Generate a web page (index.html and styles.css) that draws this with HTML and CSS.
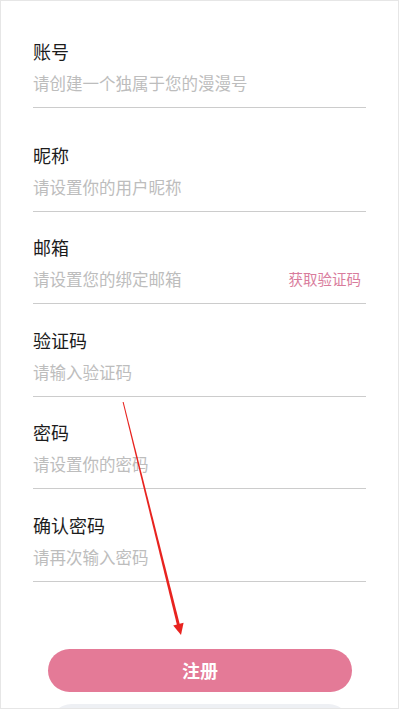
FILE: index.html
```html
<!DOCTYPE html>
<html lang="zh-CN">
<head>
<meta charset="utf-8">
<title>注册</title>
<link rel="stylesheet" href="styles.css">
</head>
<body>
<div class="frame">
  <form class="form">
    <div class="field first">
      <div class="label">账号</div>
      <div class="input-row"><span class="ph">请创建一个独属于您的漫漫号</span></div>
    </div>
    <div class="field">
      <div class="label">昵称</div>
      <div class="input-row"><span class="ph">请设置你的用户昵称</span></div>
    </div>
    <div class="field">
      <div class="label">邮箱</div>
      <div class="input-row"><span class="ph">请设置您的绑定邮箱</span><span class="get-code">获取验证码</span></div>
    </div>
    <div class="field">
      <div class="label">验证码</div>
      <div class="input-row"><span class="ph">请输入验证码</span></div>
    </div>
    <div class="field">
      <div class="label">密码</div>
      <div class="input-row"><span class="ph">请设置你的密码</span></div>
    </div>
    <div class="field">
      <div class="label">确认密码</div>
      <div class="input-row"><span class="ph">请再次输入密码</span></div>
    </div>
  </form>
  <div class="actions">
    <div class="btn-primary">注册</div>
    <div class="btn-secondary"></div>
  </div>
  <svg class="arrow" width="398" height="708" viewBox="0 0 398 708">
    <polygon points="122.6,402 123.6,402 180.2,626 177.2,626" fill="#e8231f"/>
    <polygon points="181,635 183.6,622.8 173.2,625.4" fill="#e8231f"/>
  </svg>
</div>
</body>
</html>
```
FILE: styles.css
```css
html, body {
  margin: 0;
  padding: 0;
  background: #ffffff;
}
body {
  font-family: "Noto Sans CJK SC", "Noto Sans", sans-serif;
}
.frame {
  position: relative;
  width: 399px;
  height: 709px;
  box-sizing: border-box;
  border: 1px solid #e6e6e6;
  background: #ffffff;
  overflow: hidden;
}
.form {
  display: flex;
  flex-direction: column;
  gap: 23.5px;
  padding: 38px 32px 0 32px;
  margin: 0;
}
.field {
  display: flex;
  flex-direction: column;
  gap: 8px;
  padding-bottom: 12px;
  border-bottom: 1px solid #cccccc;
}
.field.first {
  margin-bottom: 11px;
}
.label {
  font-size: 18px;
  line-height: 24px;
  color: #1c1c1c;
}
.input-row {
  display: flex;
  justify-content: space-between;
  align-items: center;
  height: 24px;
  padding-right: 5px;
}
.ph {
  font-size: 16.5px;
  line-height: 24px;
  color: #bdbdbd;
}
.get-code {
  font-size: 14.5px;
  line-height: 24px;
  color: #d97c9c;
}
.actions {
  display: flex;
  flex-direction: column;
  align-items: flex-start;
  gap: 12px;
  padding: 67px 0 0 47px;
}
.btn-primary {
  width: 304px;
  height: 43px;
  border-radius: 22px;
  background: #e47a97;
  color: #ffffff;
  font-size: 18px;
  font-weight: 700;
  display: flex;
  align-items: center;
  justify-content: center;
}
.btn-secondary {
  width: 300px;
  height: 43px;
  margin-left: 2px;
  border-radius: 22px;
  background: #eef0f4;
}
.arrow {
  position: absolute;
  left: -1px;
  top: -1px;
  pointer-events: none;
}
```
